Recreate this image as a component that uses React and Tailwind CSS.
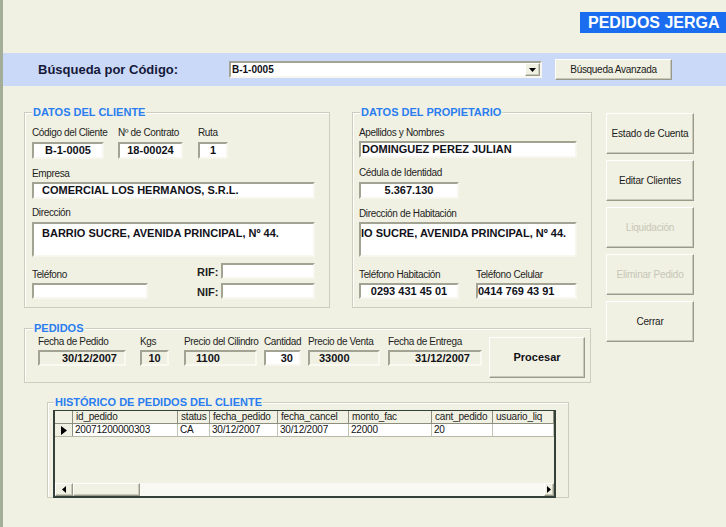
import React from "react";

const sunkenWhite =
  "bg-white border-2 border-t-[#A3A393] border-l-[#A3A393] border-r-[#F7F7EF] border-b-[#F7F7EF]";
const sunkenGray =
  "bg-[#F1F1E3] border-2 border-t-[#A3A393] border-l-[#A3A393] border-r-[#FAFAF2] border-b-[#FAFAF2]";
const raised =
  "bg-[#F1F1E3] border border-t-white border-l-white border-r-[#9A9A8A] border-b-[#9A9A8A] shadow-[inset_-1px_-1px_0_#C9C9B9]";

function Frame({ title, className, titleLeft, children }) {
  return (
    <div
      className={
        "relative border border-[#CDCDBD] shadow-[inset_1px_1px_0_#FFFFFF] " +
        className
      }
    >
      <span
        className={
          "absolute top-[-7px] px-[1px] bg-[#F1F1E3] text-[#2A7DF0] font-bold text-[11px] leading-[13px] whitespace-nowrap " +
          titleLeft
        }
      >
        {title}
      </span>
      {children}
    </div>
  );
}

function Label({ children, className = "" }) {
  return (
    <div
      className={
        "h-[12px] text-[10px] leading-[12px] tracking-[-0.35px] text-[#1E1E1E] whitespace-nowrap " +
        className
      }
    >
      {children}
    </div>
  );
}

function Box({ className = "", children, gray }) {
  return (
    <div
      className={
        (gray ? sunkenGray : sunkenWhite) +
        " flex items-center text-[11px] font-bold text-[#111118] whitespace-nowrap overflow-hidden " +
        className
      }
    >
      {children}
    </div>
  );
}

function SideButton({ children, disabled }) {
  return (
    <div
      className={
        raised +
        " w-[88px] h-[41px] flex items-center justify-center text-[10px] tracking-[-0.2px] " +
        (disabled ? "text-[#C6C6B6]" : "text-[#1A1A1A]")
      }
    >
      {children}
    </div>
  );
}

function Tri({ dir }) {
  if (dir === "down")
    return (
      <svg width="7" height="4" viewBox="0 0 7 4">
        <path d="M0 0H7L3.5 4Z" fill="#000" />
      </svg>
    );
  if (dir === "left")
    return (
      <svg width="4" height="7" viewBox="0 0 4 7">
        <path d="M4 0V7L0 3.5Z" fill="#000" />
      </svg>
    );
  return (
    <svg width="4" height="7" viewBox="0 0 4 7">
      <path d="M0 0V7L4 3.5Z" fill="#000" />
    </svg>
  );
}

const cols = [
  { w: "w-[105px]", h: "id_pedido", v: "20071200000303" },
  { w: "w-[32px]", h: "status", v: "CA" },
  { w: "w-[68px]", h: "fecha_pedido", v: "30/12/2007" },
  { w: "w-[71px]", h: "fecha_cancel", v: "30/12/2007" },
  { w: "w-[83px]", h: "monto_fac", v: "22000" },
  { w: "w-[61px]", h: "cant_pedido", v: "20" },
  { w: "w-[61px]", h: "usuario_liq", v: "" },
];

export default function App() {
  return (
    <div className="w-[726px] h-[527px] overflow-hidden bg-[#F1F1E3] border-l-[3px] border-l-[#A4AD97] flex flex-col font-['Liberation_Sans',Arial,sans-serif]">
      {/* header */}
      <div className="h-[53px] flex justify-end pt-[12px]">
        <div className="w-[146px] h-[21px] bg-[#1B6DEF] text-white font-bold text-[16px] leading-[21px] pl-[8px] whitespace-nowrap overflow-hidden">
          PEDIDOS JERGA
        </div>
      </div>

      {/* search band */}
      <div className="h-[33px] bg-[#CBD9F8] flex items-center">
        <div className="w-[226px] pl-[35px] font-bold text-[13px] text-[#15193A] whitespace-nowrap">
          Búsqueda por Código:
        </div>
        <div className={sunkenWhite + " w-[313px] h-[17px] flex items-center justify-between"}>
          <span className="pl-[1px] text-[10px] font-bold text-[#111118]">B-1-0005</span>
          <div className={raised + " w-[15px] h-[13px] flex items-center justify-center"}>
            <Tri dir="down" />
          </div>
        </div>
        <div className={raised + " ml-[13px] w-[117px] h-[21px] flex items-center justify-center text-[10px] tracking-[-0.3px] text-[#1A1A1A]"}>
          Búsqueda Avanzada
        </div>
      </div>

      {/* main */}
      <div className="flex pl-[21px] pt-[26px]">
        <div className="w-[568px] flex flex-col">
          <div className="flex">
            {/* Datos del cliente */}
            <Frame title="DATOS DEL CLIENTE" titleLeft="left-[7px]" className="w-[306px] h-[196px]">
              <div className="flex flex-col pl-[7px] pt-[14px]">
                <div className="flex">
                  <div className="w-[72px]">
                    <Label>Código del Cliente</Label>
                    <Box className="mt-[3px] h-[17px] w-[72px] justify-center">B-1-0005</Box>
                  </div>
                  <div className="ml-[14px] w-[65px]">
                    <Label>Nº de Contrato</Label>
                    <Box className="mt-[3px] h-[17px] w-[65px] justify-center">18-00024</Box>
                  </div>
                  <div className="ml-[15px] w-[30px]">
                    <Label>Ruta</Label>
                    <Box className="mt-[3px] h-[17px] w-[30px] justify-center">1</Box>
                  </div>
                </div>
                <Label className="mt-[9px]">Empresa</Label>
                <Box className="mt-[2px] h-[17px] w-[283px] pl-[8px]">COMERCIAL LOS HERMANOS, S.R.L.</Box>
                <Label className="mt-[8px]">Dirección</Label>
                <Box className="mt-[3px] h-[35px] w-[283px] pl-[8px] !items-start pt-[1px]">
                  BARRIO SUCRE, AVENIDA PRINCIPAL, Nº 44.
                </Box>
                <div className="mt-[6px] flex">
                  <div className="w-[116px] pt-[6px]">
                    <Label>Teléfono</Label>
                    <Box className="mt-[2px] h-[16px] w-[116px]" />
                  </div>
                  <div className="ml-[49px] flex flex-col gap-[4px]">
                    <div className="flex items-end">
                      <div className="w-[24px] text-[11px] leading-[13px] font-bold text-[#1E1E1E]">RIF:</div>
                      <Box className="h-[16px] w-[94px]" />
                    </div>
                    <div className="flex items-end">
                      <div className="w-[24px] text-[11px] leading-[13px] font-bold text-[#1E1E1E]">NIF:</div>
                      <Box className="h-[16px] w-[94px]" />
                    </div>
                  </div>
                </div>
              </div>
            </Frame>

            {/* Datos del propietario */}
            <Frame title="DATOS DEL PROPIETARIO" titleLeft="left-[7px]" className="ml-[22px] w-[240px] h-[196px]">
              <div className="flex flex-col pl-[6px] pt-[14px]">
                <Label>Apellidos y Nombres</Label>
                <Box className="mt-[2px] h-[17px] w-[218px] pl-[1px]">DOMINGUEZ PEREZ JULIAN</Box>
                <Label className="mt-[9px]">Cédula de Identidad</Label>
                <Box className="mt-[3px] h-[17px] w-[100px] justify-center">5.367.130</Box>
                <Label className="mt-[9px]">Dirección de Habitación</Label>
                <Box className="mt-[2px] h-[35px] w-[218px] !items-start pt-[1px]">
                  IO SUCRE, AVENIDA PRINCIPAL, Nº 44.
                </Box>
                <div className="mt-[12px] flex">
                  <div className="w-[100px]">
                    <Label>Teléfono Habitación</Label>
                    <Box className="mt-[2px] h-[16px] w-[100px] justify-center">0293 431 45 01</Box>
                  </div>
                  <div className="ml-[17px] w-[101px]">
                    <Label>Teléfono Celular</Label>
                    <Box className="mt-[2px] h-[16px] w-[101px]">0414 769 43 91</Box>
                  </div>
                </div>
              </div>
            </Frame>
          </div>

          {/* Pedidos */}
          <Frame title="PEDIDOS" titleLeft="left-[8px]" className="mt-[20px] w-[567px] h-[55px]">
            <div className="flex pl-[13px] pt-[7px]">
              <div className="w-[88px]">
                <Label>Fecha de Pedido</Label>
                <Box gray className="mt-[2px] h-[16px] w-[88px] justify-end pr-[7px]">30/12/2007</Box>
              </div>
              <div className="ml-[14px] w-[29px]">
                <Label>Kgs</Label>
                <Box gray className="mt-[2px] h-[16px] w-[29px] justify-center">10</Box>
              </div>
              <div className="ml-[15px] w-[73px]">
                <Label>Precio del Cilindro</Label>
                <Box gray className="mt-[2px] h-[16px] w-[73px] pl-[10px]">1100</Box>
              </div>
              <div className="ml-[7px] w-[37px]">
                <Label>Cantidad</Label>
                <Box className="mt-[2px] h-[16px] w-[37px] justify-end pr-[6px]">30</Box>
              </div>
              <div className="ml-[7px] w-[72px]">
                <Label>Precio de Venta</Label>
                <Box gray className="mt-[2px] h-[16px] w-[72px] pl-[9px]">33000</Box>
              </div>
              <div className="ml-[8px] w-[94px]">
                <Label>Fecha de Entrega</Label>
                <Box gray className="mt-[2px] h-[16px] w-[94px] justify-end pr-[10px]">31/12/2007</Box>
              </div>
              <div className={raised + " ml-[7px] mt-[1px] w-[96px] h-[41px] flex items-center justify-center text-[11px] font-bold text-[#111118]"}>
                Procesar
              </div>
            </div>
          </Frame>

          {/* Historico */}
          <Frame title="HISTÓRICO DE PEDIDOS DEL CLIENTE" titleLeft="left-[6px]" className="mt-[19px] ml-[23px] w-[522px] h-[96px]">
            <div className="ml-[5px] mt-[7px] w-[503px] h-[88px] border-2 border-t border-[#34403A] flex flex-col">
              <div className="h-[13px] flex border-b border-[#8E8E7E]">
                <div className="w-[18px] border-r border-[#8E8E7E]" />
                {cols.map((c, i) => (
                  <div
                    key={i}
                    className={c.w + " border-r border-[#8E8E7E] text-[10px] leading-[12px] tracking-[-0.2px] text-[#222] pl-[3px] whitespace-nowrap overflow-hidden"}
                  >
                    {c.h}
                  </div>
                ))}
              </div>
              <div className="h-[13px] flex border-b border-[#B8B8A8]">
                <div className="w-[18px] border-r border-[#8E8E7E] flex items-center justify-center">
                  <svg width="6" height="9" viewBox="0 0 6 9">
                    <path d="M0 0V9L6 4.5Z" fill="#000" />
                  </svg>
                </div>
                {cols.map((c, i) => (
                  <div
                    key={i}
                    className={c.w + " bg-white border-r border-[#C4C4B4] text-[10px] leading-[12px] tracking-[-0.2px] text-[#111] pl-[2px] whitespace-nowrap overflow-hidden"}
                  >
                    {c.v}
                  </div>
                ))}
              </div>
              <div className="flex-1" />
              <div className="h-[13px] flex bg-[#F7F7EF]">
                <div className={raised + " w-[18px] flex items-center justify-center"}>
                  <Tri dir="left" />
                </div>
                <div className={raised + " w-[67px]"} />
                <div className="flex-1 bg-[#F9F9F3]" />
                <div className={raised + " w-[10px] flex items-center justify-center"}>
                  <Tri dir="right" />
                </div>
              </div>
            </div>
          </Frame>
        </div>

        {/* side buttons */}
        <div className="ml-[14px] mt-[1px] w-[88px] flex flex-col gap-[6px]">
          <SideButton>Estado de Cuenta</SideButton>
          <SideButton>Editar Clientes</SideButton>
          <SideButton disabled>Liquidación</SideButton>
          <SideButton disabled>Eliminar Pedido</SideButton>
          <SideButton>Cerrar</SideButton>
        </div>
      </div>
    </div>
  );
}
